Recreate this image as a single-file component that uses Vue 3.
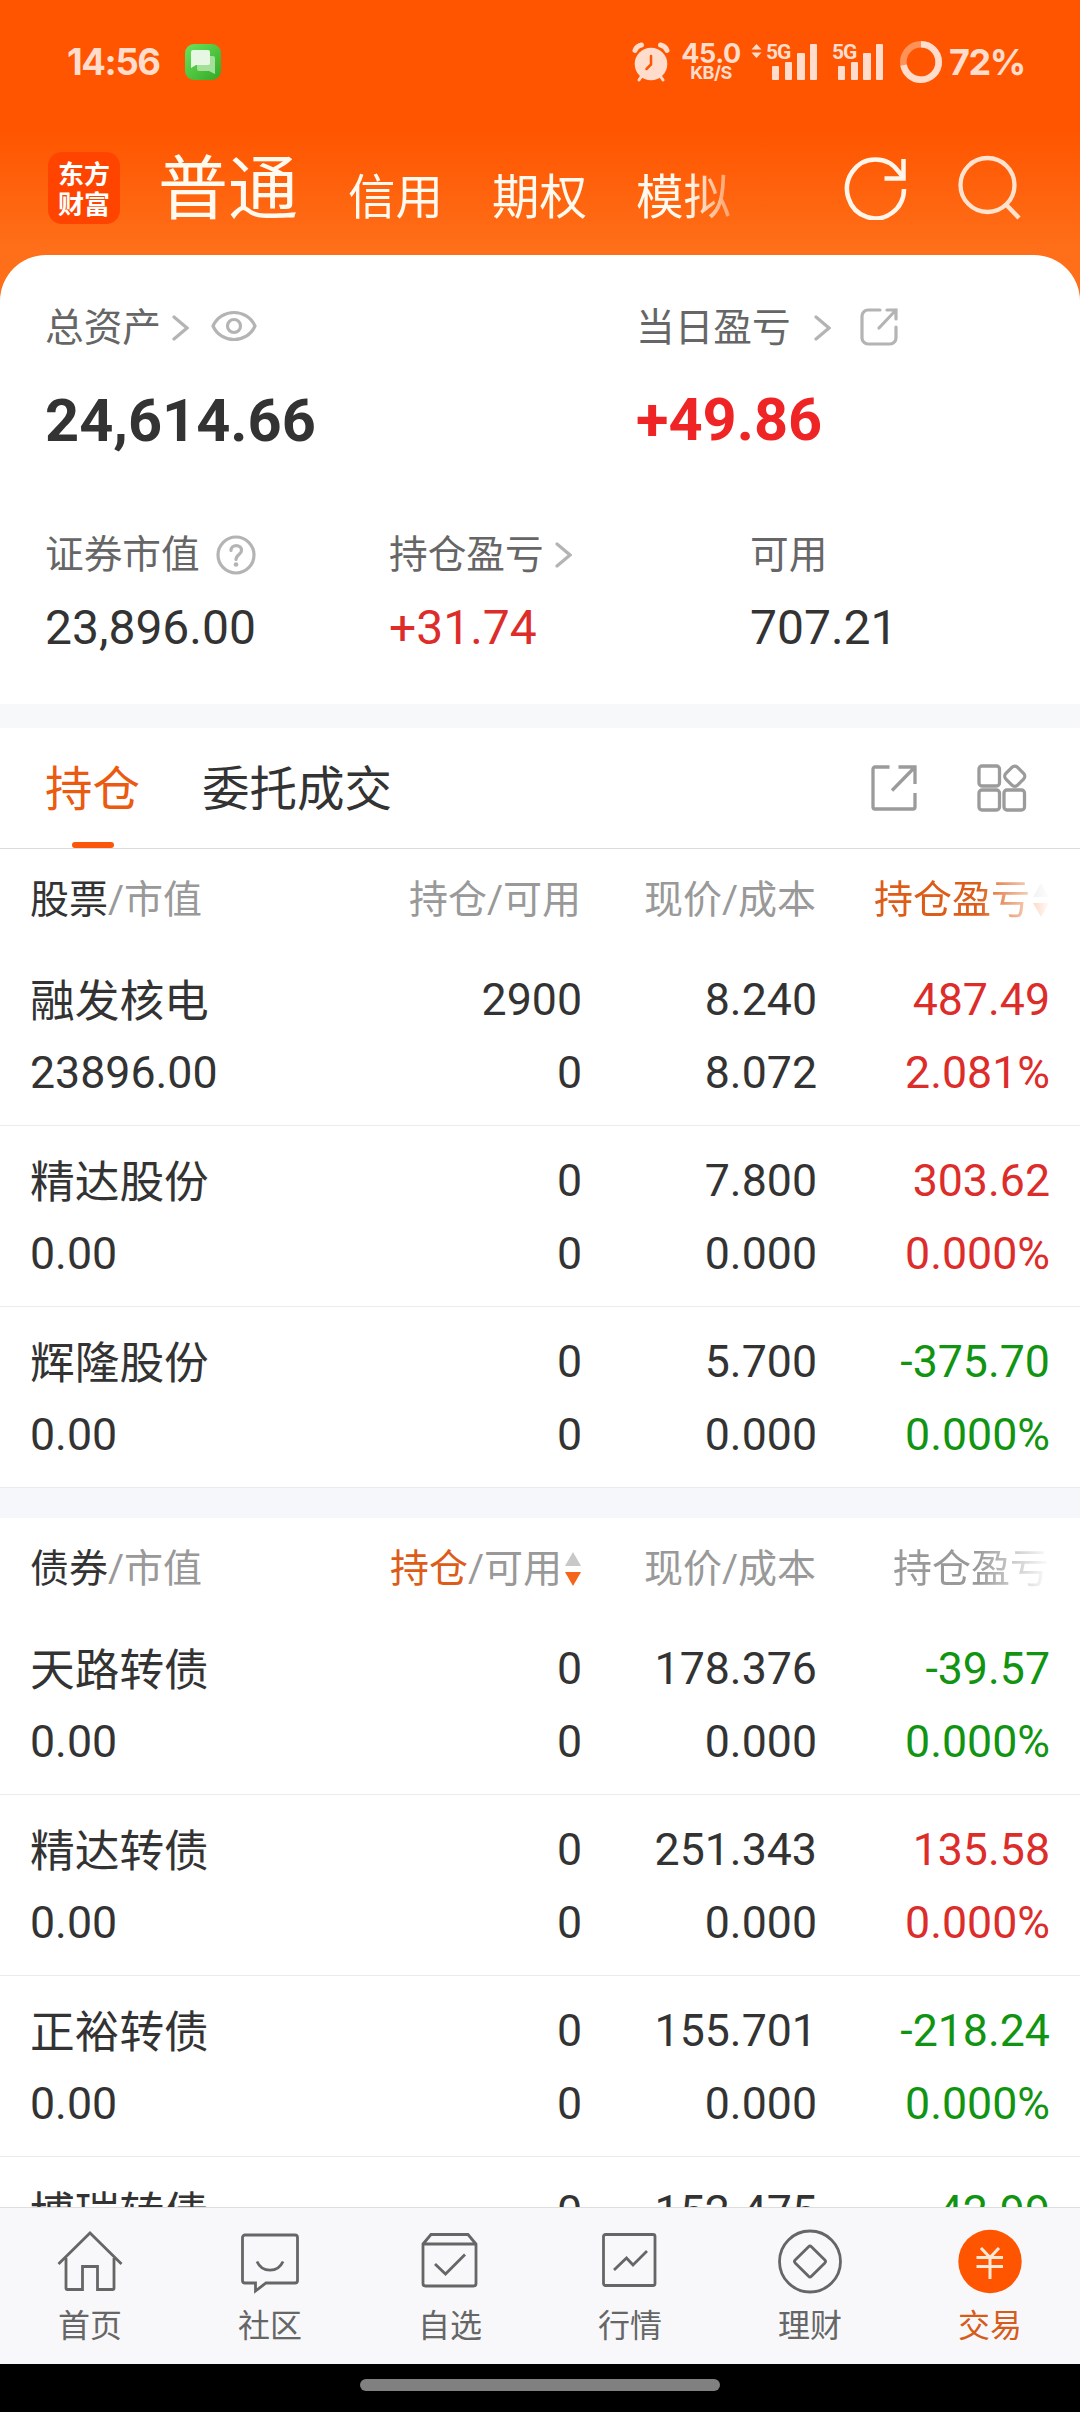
<script setup>
import { ref } from "vue";

const accounts = ["信用", "期权", "模拟"];
const activeTab = ref("持仓");
const tabs = ["持仓", "委托成交"];

const bars = [14, 18, 27, 36];

const stocks = [
  { name: "融发核电", value: "23896.00", hold: "2900", usable: "0", price: "8.240", cost: "8.072", profit: "487.49", rate: "2.081%" },
  { name: "精达股份", value: "0.00", hold: "0", usable: "0", price: "7.800", cost: "0.000", profit: "303.62", rate: "0.000%" },
  { name: "辉隆股份", value: "0.00", hold: "0", usable: "0", price: "5.700", cost: "0.000", profit: "-375.70", rate: "0.000%" },
];

const bonds = [
  { name: "天路转债", value: "0.00", hold: "0", usable: "0", price: "178.376", cost: "0.000", profit: "-39.57", rate: "0.000%" },
  { name: "精达转债", value: "0.00", hold: "0", usable: "0", price: "251.343", cost: "0.000", profit: "135.58", rate: "0.000%" },
  { name: "正裕转债", value: "0.00", hold: "0", usable: "0", price: "155.701", cost: "0.000", profit: "-218.24", rate: "0.000%" },
  { name: "博瑞转债", value: "0.00", hold: "0", usable: "0", price: "152.475", cost: "0.000", profit: "-42.99", rate: "0.000%" },
];

const groups = [
  { title: "股票", sort: "profit", rows: stocks },
  { title: "债券", sort: "hold", rows: bonds },
];

const navs = [
  { key: "home", label: "首页" },
  { key: "chat", label: "社区" },
  { key: "pick", label: "自选" },
  { key: "market", label: "行情" },
  { key: "wealth", label: "理财" },
  { key: "trade", label: "交易" },
];
const activeNav = ref("trade");

const tone = (profit) => (profit.startsWith("-") ? "down" : "up");
</script>

<template>
  <div class="page">
    <div class="status">
      <span class="time">14:56</span>
      <svg class="msg" width="36" height="36" viewBox="0 0 36 36">
        <defs>
          <linearGradient id="msgBg" x1="0" y1="0" x2="1" y2="1">
            <stop offset="0" stop-color="#6be35a" />
            <stop offset="1" stop-color="#34a826" />
          </linearGradient>
        </defs>
        <rect width="36" height="36" rx="9" fill="url(#msgBg)" />
        <path d="M14 12h14a2 2 0 0 1 2 2v16l-6-3H14a2 2 0 0 1-2-2V14a2 2 0 0 1 2-2z" fill="#a5e09b" />
        <path d="M8 6h15a2 2 0 0 1 2 2v11a2 2 0 0 1-2 2H11l-5 3V8a2 2 0 0 1 2-2z" fill="#e6f8e4" />
      </svg>
      <div class="status-right">
        <svg class="alarm" width="38" height="40" viewBox="0 0 38 40">
          <g fill="none" stroke="#ffdccb" stroke-linecap="round">
            <path d="M3 8.500Q4.500 4 9.500 3" stroke-width="5" />
            <path d="M35 8.500Q33.500 4 28.500 3" stroke-width="5" />
            <path d="M9 35L7 38M29 35L31 38" stroke-width="3" />
          </g>
          <circle cx="19" cy="22" r="16.300" fill="#ffdccb" />
          <path d="M19 14v8.500L14.500 27" fill="none" stroke="#ff5500" stroke-width="2.500" stroke-linecap="round" />
        </svg>
        <div class="speed">
          <span class="speed-num">45.0</span>
          <span class="speed-unit">KB/S</span>
        </div>
        <div class="signal first">
          <svg class="updown" width="11" height="14" viewBox="0 0 11 14">
            <path d="M5.500 0L10.500 5.500H.5zM5.500 14L.5 8.500h10z" fill="#ffdccb" />
          </svg>
          <span class="net">5G</span>
          <div class="bars"><i v-for="h in bars" :key="h" :style="{ height: h + 'px' }"></i></div>
        </div>
        <div class="signal">
          <span class="net">5G</span>
          <div class="bars"><i v-for="h in bars" :key="h" :style="{ height: h + 'px' }"></i></div>
        </div>
        <svg class="ring" width="42" height="42" viewBox="0 0 42 42">
          <circle cx="21" cy="21" r="17.700" fill="none" stroke="#ff9259" stroke-width="6.600" />
          <circle cx="21" cy="21" r="17.700" fill="none" stroke="#ffdccb" stroke-width="6.600" pathLength="100" stroke-dasharray="72 28" transform="rotate(-90 21 21)" />
        </svg>
        <span class="battery">72%</span>
      </div>
    </div>

    <div class="topbar">
      <div class="logo"><span>东方</span><span>财富</span></div>
      <div class="accounts">
        <span class="current">普通</span>
        <span v-for="a in accounts" :key="a" class="account">{{ a }}</span>
      </div>
      <svg class="refresh" width="64" height="64" viewBox="0 0 64 64">
        <path d="M60 33A28.500 29.500 0 1 1 54.500 15.500L59 21" fill="none" stroke="#fff5ea" stroke-width="4.500" />
        <path d="M59.500 3V22.500H40.500" fill="none" stroke="#fff5ea" stroke-width="4.500" />
      </svg>
      <svg class="search" width="64" height="66" viewBox="0 0 64 66">
        <circle cx="29.500" cy="30" r="27" fill="none" stroke="#ffe3cf" stroke-width="4.300" />
        <path d="M48 49.500L61 63" fill="none" stroke="#ffe3cf" stroke-width="4.500" />
      </svg>
    </div>

    <section class="summary">
      <div class="line big">
        <div class="cell">
          <div class="label">
            总资产
            <svg class="arrow" width="17" height="26" viewBox="0 0 17 26"><path d="M2 2L15 13L2 24" /></svg>
            <svg class="eye" width="46" height="32" viewBox="0 0 46 32">
              <path d="M2 16C10-2 36-2 44 16C36 34 10 34 2 16z" />
              <circle cx="23" cy="16" r="6.500" />
            </svg>
          </div>
          <div class="amount">24,614.66</div>
        </div>
        <div class="cell">
          <div class="label">
            当日盈亏
            <svg class="arrow wide" width="17" height="26" viewBox="0 0 17 26"><path d="M2 2L15 13L2 24" /></svg>
            <svg class="out" width="38" height="38" viewBox="0 0 38 38">
              <path d="M20 2H8a6 6 0 0 0-6 6V30a6 6 0 0 0 6 6H30a6 6 0 0 0 6-6V19M27 2H36V11M36 2L19 20" />
            </svg>
          </div>
          <div class="amount up">+49.86</div>
        </div>
      </div>
      <div class="line small">
        <div class="cell">
          <div class="label">
            证券市值
            <svg class="help" width="40" height="40" viewBox="0 0 40 40">
              <circle cx="20" cy="20" r="18" />
              <path d="M15 15.500C15 9 25.500 9 25.500 15.500C25.500 19.500 20 19.500 20 24.500" />
              <circle class="dot" cx="20" cy="29.500" r="2.300" />
            </svg>
          </div>
          <div class="amount">23,896.00</div>
        </div>
        <div class="cell">
          <div class="label">
            持仓盈亏
            <svg class="arrow" width="17" height="26" viewBox="0 0 17 26"><path d="M2 2L15 13L2 24" /></svg>
          </div>
          <div class="amount up">+31.74</div>
        </div>
        <div class="cell">
          <div class="label">可用</div>
          <div class="amount">707.21</div>
        </div>
      </div>
    </section>

    <div class="tabs">
      <span v-for="t in tabs" :key="t" class="tab" :class="{ active: t === activeTab }" @click="activeTab = t">{{ t }}</span>
      <svg class="tab-icon share" width="46" height="46" viewBox="0 0 46 46">
        <path d="M18.500 2H4a2 2 0 0 0-2 2V42a2 2 0 0 0 2 2H42a2 2 0 0 0 2-2V28M27.500 2H44V19M44 2L21 25.500" />
      </svg>
      <svg class="tab-icon" width="50" height="48" viewBox="0 0 50 48">
        <rect x="2" y="2" width="20.500" height="20" rx="3" />
        <rect x="2" y="26" width="20.500" height="20" rx="3" />
        <rect x="27" y="26" width="20.500" height="20" rx="3" />
        <rect x="29.500" y="4" width="16.500" height="16.500" rx="4" transform="rotate(45 37.750 12.250)" />
      </svg>
    </div>

    <div class="list">
      <section v-for="g in groups" :key="g.title" class="group">
        <div class="row head">
          <span><b>{{ g.title }}</b>/市值</span>
          <span class="num">
            <em :class="{ on: g.sort === 'hold' }">持仓</em>/可用
            <svg v-if="g.sort === 'hold'" class="sort" width="16" height="34" viewBox="0 0 16 34">
              <path d="M8 0L16 14H0z" fill="#c8c8c8" />
              <path d="M8 34L0 20H16z" fill="#f4651a" />
            </svg>
          </span>
          <span class="num">现价/成本</span>
          <span class="num fade">
            <em :class="{ on: g.sort === 'profit' }">持仓盈亏</em>
            <svg v-if="g.sort === 'profit'" class="sort" width="16" height="34" viewBox="0 0 16 34">
              <path d="M8 0L16 14H0z" fill="#c8c8c8" />
              <path d="M8 34L0 20H16z" fill="#f4651a" />
            </svg>
          </span>
        </div>
        <div v-for="r in g.rows" :key="r.name" class="row item">
          <div><p class="name">{{ r.name }}</p><p>{{ r.value }}</p></div>
          <div class="num"><p>{{ r.hold }}</p><p>{{ r.usable }}</p></div>
          <div class="num"><p>{{ r.price }}</p><p>{{ r.cost }}</p></div>
          <div class="num" :class="tone(r.profit)"><p>{{ r.profit }}</p><p>{{ r.rate }}</p></div>
        </div>
      </section>
    </div>

    <nav class="nav">
      <div v-for="n in navs" :key="n.key" class="nav-item" :class="{ active: n.key === activeNav }" @click="activeNav = n.key">
        <svg width="66" height="66" viewBox="0 0 66 66">
          <g v-if="n.key === 'home'">
            <path d="M1.500 36L33 5L64.500 36" />
            <path d="M9 30V60.500a1 1 0 0 0 1 1H25.500V38.500H40.500V61.500H56a1 1 0 0 0 1-1V30" />
          </g>
          <g v-else-if="n.key === 'chat'">
            <path d="M8 7H58a2.500 2.500 0 0 1 2.500 2.500V52.500A2.500 2.500 0 0 1 58 55H29L18.500 63V55H8A2.500 2.500 0 0 1 5.500 52.500V9.500A2.500 2.500 0 0 1 8 7z" />
            <path d="M20 33.500C25 45 41 45 46 33.500" />
          </g>
          <g v-else-if="n.key === 'pick'">
            <path d="M6 16L14 6.500H51L59 16V55.500a2.500 2.500 0 0 1-2.500 2.500H8.500A2.500 2.500 0 0 1 6 55.500zM6 16H59" />
            <path d="M18 36L28.500 46L48 26.500" />
          </g>
          <g v-else-if="n.key === 'market'">
            <rect x="6.500" y="6.500" width="51.500" height="51" rx="2" />
            <path d="M17 42L29.500 30L36 37L50 23" />
          </g>
          <g v-else-if="n.key === 'wealth'">
            <circle cx="33" cy="33.500" r="30.500" />
            <rect x="21.500" y="22" width="23" height="23" rx="2" transform="rotate(45 33 33.500)" />
          </g>
          <g v-else>
            <circle class="coin" cx="33" cy="33.500" r="31.700" />
            <path class="yen" d="M24 20L33 29.500L42 20M19.500 29.500H46M19.500 38.500H46M33 29.500V51" />
          </g>
        </svg>
        <span>{{ n.label }}</span>
      </div>
    </nav>
    <div class="gesture"><i></i></div>
  </div>
</template>

<style>
body {
  margin: 0;
}
</style>

<style scoped>
* {
  box-sizing: border-box;
}

.page {
  display: flex;
  flex-direction: column;
  width: 1080px;
  height: 2412px;
  overflow: hidden;
  font-family: Roboto, "Noto Sans CJK SC", sans-serif;
  color: #333;
  background: linear-gradient(#ff5500 130px, #ff6e18 245px, #ff6e18 310px, #fff 310px);
}

svg {
  flex: none;
}

/* system status bar */
.status {
  display: flex;
  align-items: center;
  height: 124px;
  padding: 0 56px 0 67px;
  color: #ffdccb;
  font-family: Inter, sans-serif;
}

.time {
  width: 118px;
  font-size: 36.500px;
  font-weight: 700;
  letter-spacing: -1.400px;
}

.status-right {
  display: flex;
  align-items: center;
  margin-left: auto;
}

.speed {
  display: flex;
  flex-direction: column;
  align-items: center;
  width: 58px;
  margin-left: 12px;
  font-weight: 700;
}

.speed-num {
  font-size: 27px;
  line-height: 22px;
  letter-spacing: -0.500px;
}

.speed-unit {
  font-size: 18px;
  line-height: 16px;
  letter-spacing: -0.500px;
}

.signal {
  display: flex;
  width: 51px;
  height: 36px;
  margin-left: 15px;
}

.signal.first {
  width: 66px;
  margin-left: 11px;
}

.updown {
  margin-right: 4px;
}

.net {
  width: 6px;
  font-family: Roboto, sans-serif;
  font-size: 21px;
  line-height: 16px;
  font-weight: 700;
  letter-spacing: -1px;
  white-space: nowrap;
}

.bars {
  display: flex;
  align-items: flex-end;
  gap: 5.500px;
}

.bars i {
  width: 7.200px;
  border-radius: 1px;
  background: #ffdccb;
}

.ring {
  margin-left: 17px;
}

.battery {
  width: 75px;
  margin-left: 7px;
  font-size: 36px;
  font-weight: 700;
  letter-spacing: -1.400px;
  white-space: nowrap;
}

/* account switcher */
.topbar {
  display: flex;
  align-items: center;
  height: 131px;
  padding: 0 58px 4px 48px;
}

.logo {
  display: flex;
  flex-direction: column;
  justify-content: center;
  align-items: center;
  width: 72px;
  height: 72px;
  border-radius: 14px;
  background: #ff4400;
  color: #fff;
  font-family: "Noto Sans CJK SC", sans-serif;
  font-size: 26px;
  line-height: 30px;
  font-weight: 700;
}

.accounts {
  display: flex;
  align-items: baseline;
  width: 622px;
  margin-left: 38px;
  padding-top: 4px;
  color: #fffaf0;
  -webkit-mask-image: linear-gradient(90deg, #000 530px, transparent 600px);
  mask-image: linear-gradient(90deg, #000 530px, transparent 600px);
}

.current {
  width: 142px;
  font-size: 70px;
  line-height: 90px;
}

.account {
  width: 96px;
  margin-left: 48px;
  font-size: 47.500px;
}

.refresh {
  margin-left: 64px;
}

.search {
  margin-left: auto;
}

/* assets */
.summary {
  height: 449px;
  padding: 46px 0 0 45px;
  border-radius: 46px 46px 0 0;
  background: #fff;
}

.line {
  display: flex;
}

.cell {
  flex: none;
}

.big .cell:first-child {
  width: 591px;
}

.small {
  margin-top: 72px;
}

.small .cell {
  width: 344px;
}

.small .cell:nth-child(2) {
  width: 361px;
}

.small .cell:last-child {
  width: auto;
}

.label {
  display: flex;
  align-items: center;
  height: 54px;
  font-size: 38.700px;
  line-height: 54px;
  color: #666;
}

.label svg {
  fill: none;
  stroke: #b4b4b4;
  stroke-width: 3.200;
  stroke-linecap: round;
}

.arrow {
  margin-left: 11px;
}

.arrow.wide {
  margin-left: 23px;
}

.eye {
  margin-left: 22px;
  margin-bottom: 4px;
}

.out {
  margin-left: 29px;
  margin-bottom: 3px;
}

.help {
  margin-left: 16px;
}

.label .dot {
  fill: #b4b4b4;
  stroke: none;
}

.amount {
  font-size: 48px;
  line-height: 64px;
}

.small .amount {
  margin-top: 14px;
}

.big .amount {
  margin-top: 31px;
  font-size: 59.500px;
  line-height: 70px;
  font-weight: 700;
}

.up {
  color: #dc2d2b;
}

.big .up {
  margin-top: 30px;
  color: #ee2524;
}

.down {
  color: #119411;
}

.tabs {
  display: flex;
  align-items: center;
  height: 145px;
  padding: 0 53px 0 45px;
  border-top: 24px solid #f7f8fa;
  border-bottom: 1px solid #dcdcdc;
  background: #fff;
}

.tab {
  position: relative;
  height: 120px;
  margin-right: 62px;
  font-size: 47.500px;
  line-height: 125px;
}

.tab.active {
  color: #ea5a10;
}

.tab.active::after {
  content: "";
  position: absolute;
  left: 27px;
  bottom: 0;
  width: 42px;
  height: 6px;
  border-radius: 3px;
  background: #fb560a;
}

.tab-icon {
  fill: none;
  stroke: #9b9b9b;
  stroke-width: 3.300;
}

.share {
  margin-left: auto;
  margin-right: 60px;
}

/* positions */
.list {
  flex: 1;
  min-height: 0;
  overflow: hidden;
  background: #fff;
}

.group + .group {
  border-top: 30px solid #f6f7fa;
}

.row {
  display: grid;
  grid-template-columns: 270px 282px 235px 233px;
  padding: 0 30px;
}

.head {
  height: 96px;
  font-size: 39px;
  line-height: 102px;
  color: #999;
}

.head b {
  font-weight: 400;
  color: #333;
}

.head em {
  font-style: normal;
}

.head .on {
  color: #dc5c18;
}

.head .num {
  display: flex;
  align-items: center;
  justify-content: flex-end;
  height: 102px;
  padding-right: 1px;
}

.sort {
  margin-left: 3px;
}

.fade {
  -webkit-mask-image: linear-gradient(90deg, #000 160px, transparent 234px);
  mask-image: linear-gradient(90deg, #000 160px, transparent 234px);
}

.item {
  height: 181px;
  padding-top: 19px;
  border-bottom: 1px solid #ebebeb;
  font-size: 44.700px;
  line-height: 73px;
}

.item p {
  margin: 0;
}

.item .name {
  padding-top: 4px;
  line-height: 69px;
}

.num {
  text-align: right;
}

.nav {
  display: flex;
  height: 157px;
  border-top: 1px solid #dedede;
  background: #f8f8fa;
}

.nav-item {
  display: flex;
  flex-direction: column;
  align-items: center;
  width: 180px;
  padding-top: 20px;
  font-size: 32px;
  line-height: 40px;
  color: #666;
}

.nav-item svg {
  margin-bottom: 12px;
  fill: none;
  stroke: #666;
  stroke-width: 2.800;
}

.nav-item.active {
  color: #d65c1c;
}

.nav-item .coin {
  fill: #ff5500;
  stroke: none;
}

.nav-item .yen {
  stroke: #ffe9d6;
  stroke-width: 3;
}

.gesture {
  display: flex;
  justify-content: center;
  align-items: center;
  height: 48px;
  padding-bottom: 6px;
  background: #000;
}

.gesture i {
  width: 360px;
  height: 12px;
  border-radius: 6px;
  background: #808080;
}
</style>
